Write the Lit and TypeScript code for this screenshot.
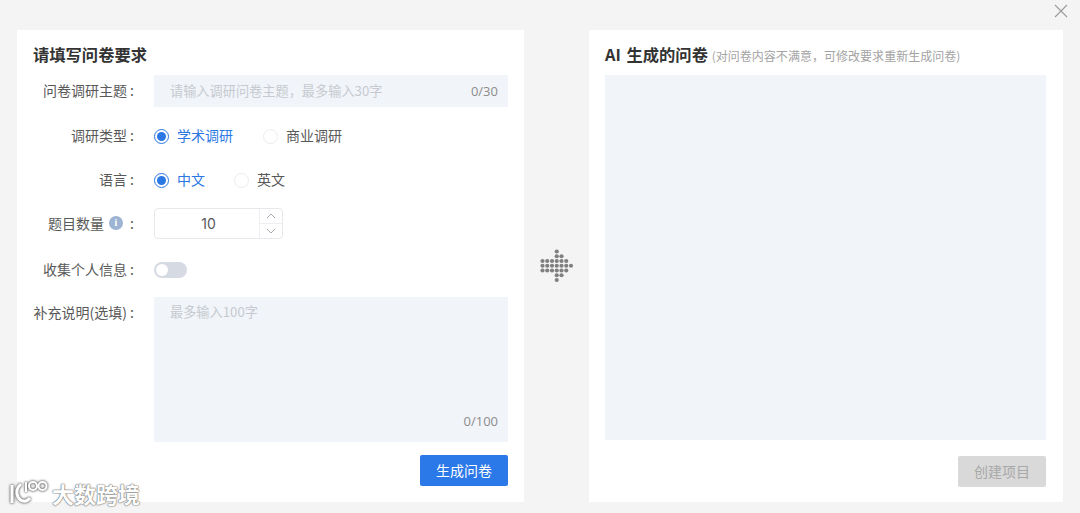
import { LitElement, html, css, svg } from "lit";
import { customElement } from "lit/decorators.js";

const DOTS: [number, number][] = [
  [3, 0],
  [3, 1], [4, 1],
  [0, 2], [1, 2], [2, 2], [3, 2], [4, 2], [5, 2],
  [0, 3], [1, 3], [2, 3], [3, 3], [4, 3], [5, 3], [6, 3],
  [0, 4], [1, 4], [2, 4], [3, 4], [4, 4], [5, 4],
  [3, 5], [4, 5],
  [3, 6],
];

@customElement("app-root")
export class AppRoot extends LitElement {
  static styles = css`
    :host {
      display: block;
      width: 1080px;
      height: 513px;
      background: #f4f4f4;
      font-family: "Noto Sans CJK SC", "Liberation Sans", sans-serif;
      font-size: 14px;
      color: #595959;
      position: relative;
      overflow: hidden;
    }
    .top { height: 30px; display: flex; justify-content: flex-end; align-items: flex-start; padding: 4px 12px 0 0; box-sizing: border-box; }
    .close { display: block; }
    .main { display: flex; height: 472px; padding-left: 17px; }
    .card { background: #fff; box-sizing: border-box; height: 472px; }
    .left { width: 507px; padding: 12px 16px 0; }
    .right { width: 474px; padding: 12px 16px 0; }
    .mid { width: 65px; display: flex; align-items: center; justify-content: center; }
    .arrow { display: block; }
    h2 { margin: 0; height: 24px; line-height: 24px; font-size: 16.3px; font-weight: 700; color: #333; white-space: nowrap; }
    .ai { margin-right: 2px; }
    .sub { font-size: 12px; font-weight: 400; color: #a3a3a3; margin-left: 0; letter-spacing: 0.03px; }
    .row { display: flex; align-items: center; height: 32px; }
    .r1 { margin-top: 9px; }
    .r2 { margin-top: 13px; }
    .r3, .r4 { margin-top: 12px; }
    .r5 { margin-top: 14px; }
    .r6 { margin-top: 11px; height: 145px; align-items: flex-start; }
    .label { width: 100px; margin-right: 19px; margin-left: 2px; flex: none; white-space: nowrap; color: #595959; display: flex; justify-content: flex-end; align-items: center; padding-bottom: 2px; box-sizing: border-box; }
    .r6 .label { margin-top: 5px; }
    .colon { width: 8px; text-align: right; padding-right: 1px; box-sizing: border-box; flex: none; }
    .info { width: 14px; height: 14px; border-radius: 50%; background: #9db3d2; color: #fff; font-size: 10px; line-height: 14px; text-align: center; margin: 0 4px 0 5px; font-family: "Liberation Serif", serif; font-weight: 700; flex: none; }
    .field { width: 354px; background: #f1f4f9; box-sizing: border-box; position: relative; color: #c6cad0; font-size: 13.2px; }
    .input { height: 32px; line-height: 31px; padding-left: 16px; }
    .area { height: 145px; padding: 4px 16px 0; line-height: 22px; }
    .count { position: absolute; right: 10px; bottom: 6px; font-size: 13px; line-height: 20px; color: #8c8c8c; font-family: "Open Sans", sans-serif; }
    .area .count { bottom: 11px; }
    .radios { display: flex; align-items: center; }
    .radio { display: flex; align-items: center; color: #595959; }
    .radio.on { color: #2b78e4; }
    .radio span:last-child { padding-bottom: 2px; }
    .dot { width: 13px; height: 13px; border: 1px solid #ececec; border-radius: 50%; margin-right: 8px; box-sizing: content-box; position: relative; }
    .on .dot { border-color: #2b78e4; }
    .on .dot::after { content: ""; position: absolute; inset: 2px; background: #2b78e4; border-radius: 50%; }
    .g1 { margin-left: 30px; }
    .g2 { margin-left: 29px; }
    .number { width: 129px; height: 31px; border: 1px solid #e6e8ec; border-radius: 4px; box-sizing: border-box; display: flex; color: #595959; margin-bottom: 1px; }
    .num { flex: 1; text-align: center; line-height: 29px; font-family: "Inter", sans-serif; font-size: 14px; padding-left: 3px; }
    .steps { width: 22px; border-left: 1px solid #eeeff2; display: flex; flex-direction: column; }
    .steps div { flex: 1; display: flex; align-items: center; justify-content: center; }
    .steps div + div { border-top: 1px solid #eeeff2; }
    .switch { width: 33px; height: 16px; border-radius: 8px; background: #d6dae3; position: relative; }
    .switch::after { content: ""; position: absolute; left: 2px; top: 2px; width: 12px; height: 12px; border-radius: 50%; background: #fff; }
    .foot { display: flex; justify-content: flex-end; margin-top: 13px; }
    .btn { width: 88px; height: 31px; line-height: 30px; text-align: center; border-radius: 2px; box-sizing: border-box; }
    .primary { background: #2b78e9; color: #fff; }
    .panel { height: 365px; width: 441px; background: #f1f4f9; margin-top: 9px; }
    .foot2 { margin-top: 16px; width: 441px; }
    .disabled { background: #d9d9d9; color: #a8a8a8; }
    .mark { position: absolute; left: 10px; top: 480px; display: flex; align-items: center; color: #fff; font-size: 22px; font-weight: 700; line-height: 26px; text-shadow: 0 0 2px #777, 0 0 1px #777, 0 0 1px #777; }
    .mark svg { display: block; margin-right: 3px; filter: drop-shadow(0 0 1px #666) drop-shadow(0 0 1px #999); }
  `;

  private colon() {
    return html`<span class="colon">:</span>`;
  }

  render() {
    return html`
      <div class="top">
        <svg class="close" width="14" height="14" viewBox="0 0 14 14" fill="none" stroke="#9a9a9a" stroke-width="1.1">
          <path d="M1 1L13 13M13 1L1 13" />
        </svg>
      </div>
      <div class="main">
        <section class="card left">
          <h2>请填写问卷要求</h2>
          <div class="row r1">
            <div class="label">问卷调研主题${this.colon()}</div>
            <div class="field input">请输入调研问卷主题，最多输入30字<span class="count">0/30</span></div>
          </div>
          <div class="row r2">
            <div class="label">调研类型${this.colon()}</div>
            <div class="radios">
              <div class="radio on"><span class="dot"></span><span>学术调研</span></div>
              <div class="radio g1"><span class="dot"></span><span>商业调研</span></div>
            </div>
          </div>
          <div class="row r3">
            <div class="label">语言${this.colon()}</div>
            <div class="radios">
              <div class="radio on"><span class="dot"></span><span>中文</span></div>
              <div class="radio g2"><span class="dot"></span><span>英文</span></div>
            </div>
          </div>
          <div class="row r4">
            <div class="label">题目数量<span class="info">i</span>${this.colon()}</div>
            <div class="number">
              <div class="num">10</div>
              <div class="steps">
                <div><svg width="10" height="6" viewBox="0 0 10 6" fill="none" stroke="#a6acb5"><path d="M1 5L5 1L9 5" /></svg></div>
                <div><svg width="10" height="6" viewBox="0 0 10 6" fill="none" stroke="#a6acb5"><path d="M1 1L5 5L9 1" /></svg></div>
              </div>
            </div>
          </div>
          <div class="row r5">
            <div class="label">收集个人信息${this.colon()}</div>
            <div class="switch"></div>
          </div>
          <div class="row r6">
            <div class="label">补充说明(选填)${this.colon()}</div>
            <div class="field area">最多输入100字<span class="count">0/100</span></div>
          </div>
          <div class="foot"><div class="btn primary">生成问卷</div></div>
        </section>
        <div class="mid">
          <svg class="arrow" width="34" height="34" viewBox="0 0 34 34" fill="#808080">
            ${DOTS.map(([c, r]) => svg`<circle cx=${2.5 + c * 4.75} cy=${2.5 + r * 4.75} r="2.1" />`)}
          </svg>
        </div>
        <section class="card right">
          <h2><span class="ai">AI</span> 生成的问卷 <span class="sub">(对问卷内容不满意，可修改要求重新生成问卷)</span></h2>
          <div class="panel"></div>
          <div class="foot foot2"><div class="btn disabled">创建项目</div></div>
        </section>
      </div>
      <div class="mark">
        <svg width="39" height="26" viewBox="0 0 39 26" fill="none" stroke="#fff">
          <path d="M2 5V23" stroke-width="3" />
          <path d="M11 4C6.5 8 6 13 8 17C10.5 21.500 16 23 20 18" stroke-width="3" />
          <path d="M16 2V12" stroke-width="2" />
          <circle cx="23" cy="6" r="4" stroke-width="2" />
          <circle cx="32.5" cy="6" r="4" stroke-width="2" />
        </svg>
        <span>大数跨境</span>
      </div>
    `;
  }
}
